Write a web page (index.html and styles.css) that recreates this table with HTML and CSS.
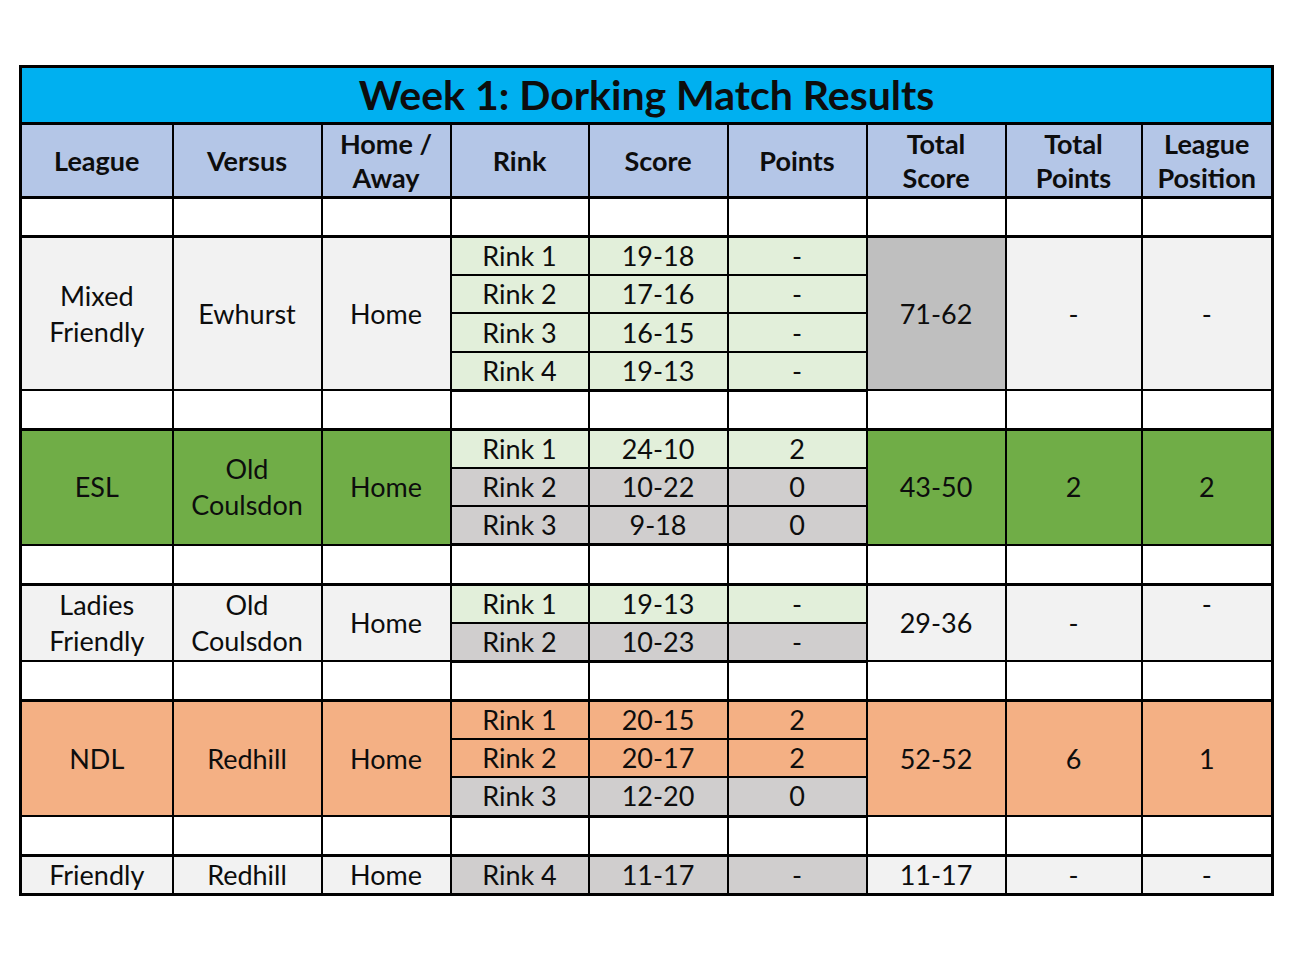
FILE: index.html
```html
<!DOCTYPE html>
<html>
<head>
<meta charset="utf-8">
<link rel="stylesheet" href="styles.css">
</head>
<body>
<div class="page">
<table class="results">
  <colgroup>
    <col style="width:152px"><col style="width:149px"><col style="width:129px"><col style="width:138px"><col style="width:139px"><col style="width:139px"><col style="width:139px"><col style="width:136px"><col style="width:131px">
  </colgroup>
  <tr class="title-row"><td colspan="9" class="title">Week 1: Dorking Match Results</td></tr>
  <tr class="head-row">
    <th>League</th><th>Versus</th><th>Home /<br>Away</th><th>Rink</th><th>Score</th><th>Points</th><th>Total<br>Score</th><th>Total<br>Points</th><th>League<br>Position</th>
  </tr>
  <tr class="blank group-end"><td></td><td></td><td></td><td></td><td></td><td></td><td></td><td></td><td></td></tr>

  <tr class="group-start">
    <td rowspan="4" class="lgrey">Mixed<br>Friendly</td>
    <td rowspan="4" class="lgrey">Ewhurst</td>
    <td rowspan="4" class="lgrey">Home</td>
    <td class="lgreen">Rink 1</td><td class="lgreen">19-18</td><td class="lgreen">-</td>
    <td rowspan="4" class="dgrey">71-62</td>
    <td rowspan="4" class="lgrey">-</td>
    <td rowspan="4" class="lgrey">-</td>
  </tr>
  <tr><td class="lgreen">Rink 2</td><td class="lgreen">17-16</td><td class="lgreen">-</td></tr>
  <tr><td class="lgreen">Rink 3</td><td class="lgreen">16-15</td><td class="lgreen">-</td></tr>
  <tr class="group-end"><td class="lgreen">Rink 4</td><td class="lgreen">19-13</td><td class="lgreen">-</td></tr>
  <tr class="blank group-end"><td></td><td></td><td></td><td></td><td></td><td></td><td></td><td></td><td></td></tr>

  <tr>
    <td rowspan="3" class="green">ESL</td>
    <td rowspan="3" class="green">Old<br>Coulsdon</td>
    <td rowspan="3" class="green">Home</td>
    <td class="lgreen">Rink 1</td><td class="lgreen">24-10</td><td class="lgreen">2</td>
    <td rowspan="3" class="green">43-50</td>
    <td rowspan="3" class="green">2</td>
    <td rowspan="3" class="green">2</td>
  </tr>
  <tr><td class="mgrey">Rink 2</td><td class="mgrey">10-22</td><td class="mgrey">0</td></tr>
  <tr class="group-end"><td class="mgrey">Rink 3</td><td class="mgrey">9-18</td><td class="mgrey">0</td></tr>
  <tr class="blank group-end"><td></td><td></td><td></td><td></td><td></td><td></td><td></td><td></td><td></td></tr>

  <tr>
    <td rowspan="2" class="lgrey">Ladies<br>Friendly</td>
    <td rowspan="2" class="lgrey">Old<br>Coulsdon</td>
    <td rowspan="2" class="lgrey">Home</td>
    <td class="lgreen">Rink 1</td><td class="lgreen">19-13</td><td class="lgreen">-</td>
    <td rowspan="2" class="lgrey">29-36</td>
    <td rowspan="2" class="lgrey">-</td>
    <td rowspan="2" class="lgrey top">-</td>
  </tr>
  <tr class="group-end"><td class="mgrey">Rink 2</td><td class="mgrey">10-23</td><td class="mgrey">-</td></tr>
  <tr class="blank group-end"><td></td><td></td><td></td><td></td><td></td><td></td><td></td><td></td><td></td></tr>

  <tr>
    <td rowspan="3" class="orange">NDL</td>
    <td rowspan="3" class="orange">Redhill</td>
    <td rowspan="3" class="orange">Home</td>
    <td class="orange">Rink 1</td><td class="orange">20-15</td><td class="orange">2</td>
    <td rowspan="3" class="orange">52-52</td>
    <td rowspan="3" class="orange">6</td>
    <td rowspan="3" class="orange">1</td>
  </tr>
  <tr><td class="orange">Rink 2</td><td class="orange">20-17</td><td class="orange">2</td></tr>
  <tr class="group-end"><td class="mgrey">Rink 3</td><td class="mgrey">12-20</td><td class="mgrey">0</td></tr>
  <tr class="blank group-end"><td></td><td></td><td></td><td></td><td></td><td></td><td></td><td></td><td></td></tr>

  <tr class="group-end">
    <td class="lgrey">Friendly</td><td class="lgrey">Redhill</td><td class="lgrey">Home</td>
    <td class="mgrey">Rink 4</td><td class="mgrey">11-17</td><td class="mgrey">-</td>
    <td class="lgrey">11-17</td><td class="lgrey">-</td><td class="lgrey">-</td>
  </tr>
</table>
</div>
</body>
</html>
```

FILE: styles.css
```css
html, body {
  margin: 0;
  padding: 0;
  background: #ffffff;
}

.page {
  padding: 65px 0 0 19px;
}

.results {
  border-collapse: collapse;
  table-layout: fixed;
  width: 1252px;
  font-family: "Lato", "Open Sans", "Liberation Sans", sans-serif;
  color: #0d0d0d;
  border: 3px solid #000;
}

.results td,
.results th {
  border: 2px solid #000;
  text-align: center;
  vertical-align: middle;
  padding: 0;
  font-size: 27px;
  line-height: 36px;
  height: 36.17px;
  overflow: hidden;
  white-space: nowrap;
}

.results .title {
  background: #00b0f0;
  font-weight: 700;
  font-size: 41px;
  height: 54px;
  line-height: 52px;
  border-bottom: 3px solid #000;
  padding-top: 0;
}

.results th {
  background: #b4c6e7;
  font-weight: 700;
  font-size: 27px;
  line-height: 34px;
  height: 71px;
  border-bottom: 3px solid #000;
}

.results .group-end td {
  border-bottom: 3px solid #000;
}

.blank td {
  background: #ffffff;
}

.lgrey { background: #f2f2f2; }
.dgrey { background: #bfbfbf; }
.mgrey { background: #d0cece; }
.lgreen { background: #e2efda; }
.green { background: #70ad47; }
.orange { background: #f4b084; }

.results td.top {
  vertical-align: top;
  padding-top: 0;
}
```
